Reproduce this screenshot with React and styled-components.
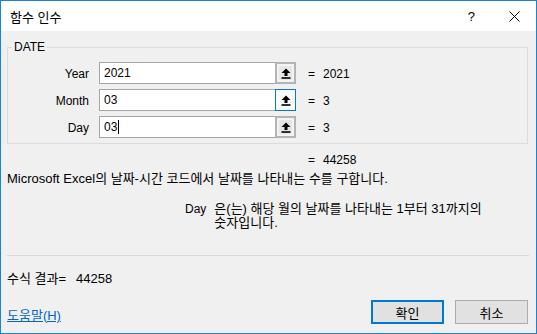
import React from "react"
import styled, { createGlobalStyle } from "styled-components"

const rows = [
  { label: "Year", value: "2021", result: "2021" },
  { label: "Month", value: "03", result: "3", hot: true },
  { label: "Day", value: "03", result: "3", caret: true },
]

function RefIcon() {
  return (
    <svg width="10" height="11" viewBox="0 0 10 11">
      <path d="M5 0.5 L9.5 5 L6.5 5 L6.5 8 L3.5 8 L3.5 5 L0.5 5 Z" fill="#000" />
      <rect x="0.5" y="9.2" width="9" height="1.6" fill="#000" />
    </svg>
  )
}

function CloseIcon() {
  return (
    <svg width="11" height="11" viewBox="0 0 11 11">
      <path d="M0.5 0.5 L10.5 10.5 M10.5 0.5 L0.5 10.5" stroke="#000" strokeWidth="1" />
    </svg>
  )
}

function App() {
  return (
    <>
      <GlobalStyle />
      <Window>
        <TitleBar>
          <Title>함수 인수</Title>
          <TitleButtons>
            <HelpGlyph>?</HelpGlyph>
            <CloseIcon />
          </TitleButtons>
        </TitleBar>
        <Body>
          <Group>
            <Legend>DATE</Legend>
            <ArgGrid>
              {rows.map((r) => (
                <React.Fragment key={r.label}>
                  <ArgLabel>{r.label}</ArgLabel>
                  <InputBox>
                    <Field>
                      {r.value}
                      {r.caret && <Caret />}
                    </Field>
                    <RefButton $hot={r.hot}>
                      <RefIcon />
                    </RefButton>
                  </InputBox>
                  <Result>
                    <Eq>=</Eq>
                    <span>{r.result}</span>
                  </Result>
                </React.Fragment>
              ))}
            </ArgGrid>
          </Group>
          <Summary>
            <Eq>=</Eq>
            <span>44258</span>
          </Summary>
          <Description>Microsoft Excel의 날짜-시간 코드에서 날짜를 나타내는 수를 구합니다.</Description>
          <ArgHelp>
            <ArgName>Day</ArgName>
            <ArgText>은(는) 해당 월의 날짜를 나타내는 1부터 31까지의 숫자입니다.</ArgText>
          </ArgHelp>
          <Separator />
          <FormulaResult>
            수식 결과=<ResultValue>44258</ResultValue>
          </FormulaResult>
          <Footer>
            <HelpLink href="#">도움말(H)</HelpLink>
            <Buttons>
              <DialogButton $primary>확인</DialogButton>
              <DialogButton>취소</DialogButton>
            </Buttons>
          </Footer>
        </Body>
      </Window>
    </>
  )
}

export default App

const GlobalStyle = createGlobalStyle`
  html, body {
    margin: 0;
    padding: 0;
    background: #ffffff;
  }
  * {
    box-sizing: border-box;
  }
`

const Window = styled.div`
  width: 537px;
  height: 334px;
  border: 1px solid #1883d7;
  display: flex;
  flex-direction: column;
  font-family: "Liberation Sans", "Noto Sans CJK KR", sans-serif;
  font-size: 12px;
  color: #000;
  overflow: hidden;
`

const TitleBar = styled.div`
  height: 30px;
  background: #fff;
  display: flex;
  align-items: center;
  justify-content: space-between;
  padding: 0 16px 0 9px;
`

const Title = styled.div`
  font-size: 13px;
`

const TitleButtons = styled.div`
  display: flex;
  align-items: center;
  gap: 34px;
`

const HelpGlyph = styled.span`
  font-size: 13px;
`

const Body = styled.div`
  flex: 1;
  background: #f0f0f0;
  display: flex;
  flex-direction: column;
  padding: 9px 7px 9px 6px;
`

const Group = styled.fieldset`
  margin: 0 1px 0 0;
  padding: 0 0 5px 0;
  border: 1px solid #dcdcdc;
`

const Legend = styled.legend`
  margin-left: 4px;
  padding: 0 2px;
  line-height: 14px;
`

const ArgGrid = styled.div`
  display: grid;
  grid-template-columns: 81px 197px 1fr;
  grid-auto-rows: 22px;
  row-gap: 5px;
  column-gap: 10px;
  margin-top: 8px;
  align-items: center;
`

const ArgLabel = styled.div`
  text-align: right;
  padding-top: 1px;
`

const InputBox = styled.div`
  height: 22px;
  display: flex;
  background: #fff;
  border: 1px solid #a5a5a5;
`

const Field = styled.div`
  flex: 1;
  display: flex;
  align-items: center;
  padding-left: 4px;
`

const Caret = styled.span`
  display: inline-block;
  width: 1px;
  height: 14px;
  background: #000;
  margin-left: 1px;
`

const RefButton = styled.div`
  width: 21px;
  margin: -1px -1px -1px 0;
  display: flex;
  align-items: center;
  justify-content: center;
  border: ${(p) => (p.$hot ? "1px solid #0078d7" : "2px solid #b4b4b4")};
  background: ${(p) => (p.$hot ? "#f7fbfe" : "#e6e6e6")};
  box-shadow: ${(p) => (p.$hot ? "none" : "inset 0 0 0 2px #f4f4f4")};
`

const Result = styled.div`
  display: flex;
  padding-left: 2px;
  padding-top: 1px;
`

const Eq = styled.span`
  width: 15px;
`

const Summary = styled.div`
  display: flex;
  padding-left: 301px;
  margin-top: 9px;
  line-height: 14px;
`

const Description = styled.div`
  margin-top: 5px;
  line-height: 14px;
  font-size: 13px;
`

const ArgHelp = styled.div`
  display: flex;
  padding-left: 178px;
  margin-top: 16px;
  line-height: 14px;
  font-size: 13px;
`

const ArgName = styled.div`
  margin-right: 8px;
  font-size: 12px;
`

const ArgText = styled.div`
  width: 268px;
`

const Separator = styled.div`
  height: 1px;
  background: #d9d9d9;
  margin-top: 25px;
`

const FormulaResult = styled.div`
  margin-top: 16px;
  line-height: 14px;
  font-size: 13px;
`

const ResultValue = styled.span`
  margin-left: 10px;
`

const Footer = styled.div`
  margin-top: auto;
  display: flex;
  align-items: center;
  justify-content: space-between;
  font-size: 13px;
`

const HelpLink = styled.a`
  color: #0066cc;
  text-decoration: underline;
  padding-top: 4px;
`

const Buttons = styled.div`
  display: flex;
  gap: 11px;
  padding-right: 1px;
`

const DialogButton = styled.button`
  width: 73px;
  height: 24px;
  font: inherit;
  color: #000;
  background: #e1e1e1;
  border: ${(p) => (p.$primary ? "2px solid #0078d7" : "1px solid #adadad")};
  padding: 0;
`
